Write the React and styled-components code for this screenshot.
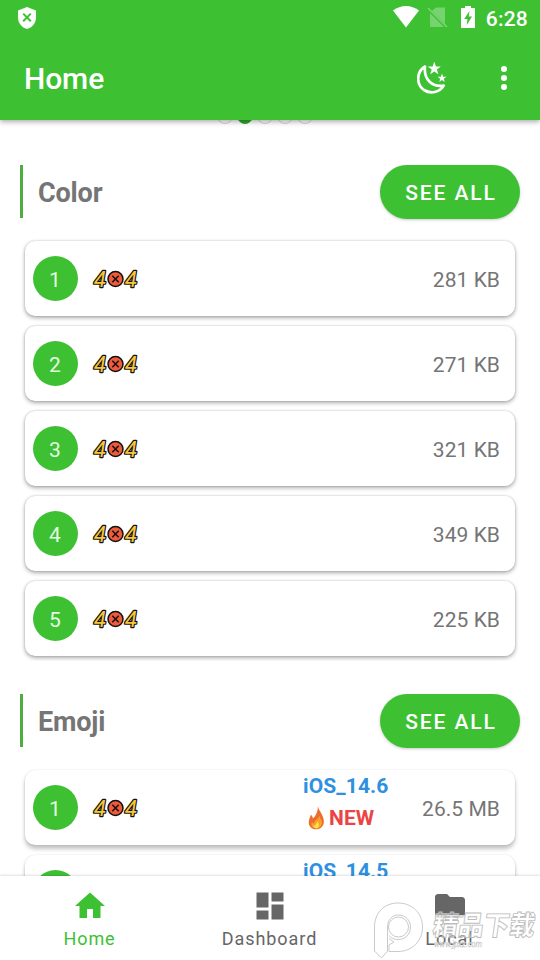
import React from 'react'
import styled, { createGlobalStyle } from 'styled-components'

const GlobalStyle = createGlobalStyle`
    * {
        box-sizing: border-box;
    }
    body {
        margin: 0;
        background: #fff;
        font-family: Roboto, "Noto Sans CJK SC", sans-serif;
    }
`;

const green = '#3dc133';

const Screen = styled.div`
    position: relative;
    width: 540px;
    height: 960px;
    display: flex;
    flex-direction: column;
    overflow: hidden;
    background: #fff;
`;

const TopContainer = styled.header`
    position: relative;
    z-index: 2;
    height: 120px;
    flex: none;
    background: ${green};
    color: white;
    box-shadow: 0 2px 5px rgba(0, 0, 0, 0.32);
`;

const StatusBar = styled.div`
    height: 36px;
    display: flex;
    align-items: center;
    padding: 0 12px 0 18px;
`;

const StatusIcons = styled.div`
    display: flex;
    align-items: center;
    margin-left: auto;

    svg {
        margin-bottom: 2px;
    }
    svg:nth-child(2) {
        margin-left: 8px;
        margin-right: 13px;
    }
`;

const Clock = styled.span`
    font-size: 21px;
    font-weight: 500;
    line-height: 36px;
    padding-top: 2px;
    margin-left: 11px;
    letter-spacing: 0.2px;
`;

const Toolbar = styled.div`
    height: 84px;
    display: flex;
    align-items: center;
    padding: 0 30px 0 24px;
`;

const Title = styled.h1`
    flex: 1;
    margin: 0;
    font-size: 30px;
    font-weight: 500;
    letter-spacing: -0.1px;
`;

const MoreDots = styled.div`
    width: 12px;
    margin-left: 51px;
    display: flex;
    flex-direction: column;
    align-items: center;
    gap: 3px;

    i {
        width: 6px;
        height: 6px;
        border-radius: 50%;
        background: white;
    }
`;

const Content = styled.main`
    flex: 1;
    min-height: 0;
    overflow: hidden;
`;

const Pager = styled.div`
    height: 16px;
    margin-top: -12px;
    display: flex;
    justify-content: center;
    gap: 4px;
    padding-right: 10px;
`;

const PagerDot = styled.span`
    width: 16px;
    height: 16px;
    border-radius: 50%;
    border: 1px solid ${(props) => (props.$active ? '#35a52d' : '#d2d2d2')};
    background: ${(props) => (props.$active ? '#35a52d' : 'transparent')};
`;

const Section = styled.section`
    padding-top: ${(props) => props.$top}px;
`;

const SectionHeader = styled.div`
    height: 54px;
    display: flex;
    align-items: center;
    justify-content: space-between;
    padding: 0 20px;
`;

const SectionTitle = styled.h2`
    height: 53px;
    margin: 0 0 1px;
    padding-left: 15px;
    border-left: 3px solid #4caf3f;
    color: #757575;
    font-size: 27px;
    line-height: 56px;
    font-weight: 700;
    letter-spacing: -0.15px;
`;

const SeeAllButton = styled.button`
    width: 140px;
    height: 54px;
    padding: 2px 0 0 2px;
    border: none;
    border-radius: 27px;
    background: ${green};
    color: white;
    font-family: inherit;
    font-size: 21px;
    font-weight: 500;
    letter-spacing: 1.9px;
    box-shadow: 0 1px 3px rgba(0, 0, 0, 0.22);
`;

const List = styled.div`
    display: flex;
    flex-direction: column;
    gap: 10px;
    margin-top: 17px;
    padding: 5px 25px 5px;
    overflow: hidden;
`;

const Card = styled.div`
    height: 75px;
    flex: none;
    display: flex;
    align-items: center;
    padding: 0 15px 0 8px;
    border-radius: 10px;
    background: white;
    box-shadow: ${(props) => (props.$raised
        ? '0 4px 4px rgba(0, 0, 0, 0.24), 0 0 2px rgba(0, 0, 0, 0.14)'
        : '0 2px 4px rgba(0, 0, 0, 0.32), 0 0 2px rgba(0, 0, 0, 0.22)')};
`;

const Rank = styled.div`
    width: 45px;
    height: 45px;
    margin-right: 14px;
    padding-right: 1px;
    border-radius: 50%;
    background: ${green};
    color: #e4fbe2;
    font-size: 21px;
    line-height: 48px;
    text-align: center;
`;

const Tags = styled.div`
    width: 119px;
    height: 75px;
    margin-left: auto;
    font-size: 21px;
    font-weight: 700;
    line-height: 32px;
`;

const Version = styled.div`
    color: #2e90e0;
    letter-spacing: 0.1px;
`;

const NewTag = styled.div`
    display: flex;
    align-items: center;
    gap: 4px;
    padding-left: 5px;
    color: #ea4444;
`;

const Size = styled.div`
    margin-left: ${(props) => (props.$tagged ? '0' : 'auto')};
    padding-top: 3px;
    color: #757575;
    font-size: 21px;
    letter-spacing: 0.05px;
    white-space: nowrap;
`;

const BottomNav = styled.nav`
    position: relative;
    z-index: 2;
    height: 84px;
    flex: none;
    display: flex;
    background: white;
    box-shadow: 0 -1px 2px rgba(0, 0, 0, 0.12);
`;

const NavItem = styled.div`
    flex: 1;
    display: flex;
    flex-direction: column;
    align-items: center;
    padding-top: 12px;
    color: ${(props) => (props.$active ? green : '#666')};
`;

const NavLabel = styled.span`
    margin-top: 4px;
    padding-right: 1px;
    font-size: 18px;
    line-height: 21px;
    letter-spacing: 0.95px;
`;

const Watermark = styled.div`
    position: absolute;
    z-index: 3;
    left: 370px;
    top: 898px;
    width: 170px;
    height: 62px;
`;

function ShieldIcon() {
    return (
        <svg width="18" height="22" viewBox="0 0 18 22">
            <path d="M9 0L18 3.4V10.5C18 16 14.2 20.6 9 22C3.8 20.6 0 16 0 10.5V3.4Z" fill="white" />
            <path d="M5.2 6.6L12.8 14.2M12.8 6.6L5.2 14.2" stroke={green} strokeWidth="2" />
        </svg>
    )
}

function WifiIcon() {
    return (
        <svg width="26" height="22" viewBox="0 0 26 22">
            <path d="M0 4.6Q6 0 13 0T26 4.6L13 21.5Z" fill="white" />
        </svg>
    )
}

function NoSimIcon() {
    return (
        <svg width="21" height="21" viewBox="0 0 21 21">
            <path d="M9 0.5H18V16.5L5 3.8ZM3 6L17 20H3Z" fill="white" opacity=".3" />
            <path d="M1 1L20 20" stroke="white" strokeWidth="1.5" opacity=".35" />
        </svg>
    )
}

function BatteryIcon() {
    return (
        <svg width="14" height="22" viewBox="0 0 14 22">
            <path d="M4 0H10V2H14V22H0V2H4Z" fill="white" />
            <path d="M8.4 5L3.2 13H6.4L5.8 19L11 10.6H7.8Z" fill={green} />
        </svg>
    )
}

function NightIcon() {
    return (
        <svg width="30" height="32" viewBox="0 0 30 32">
            <path d="M8 4.5C-1 10-.8 22.5 7 28C13.5 32.2 22.5 30.5 26.7 23.6C15 25.8 6.5 17 8 4.5Z" fill="none" stroke="white" strokeWidth="2.7" strokeLinejoin="round" />
            <path d="M17.3 -.4L18.9 4.4L23.8 4.5L19.9 7.5L21.3 12.3L17.3 9.4L13.2 12.3L14.7 7.5L10.8 4.5L15.7 4.4Z" fill="white" />
            <path d="M25 11.6L26.1 14.7L29.4 14.8L26.8 16.8L27.7 20L25 18.1L22.3 20L23.2 16.8L20.6 14.8L23.9 14.7Z" fill="white" />
        </svg>
    )
}

// "404" placeholder for previews that could not be loaded
function NotFoundLogo() {
    return (
        <svg width="48" height="26" viewBox="0 0 48 26">
            <g fontFamily="Roboto, sans-serif" fontSize="22" fontStyle="italic" fontWeight="400" fill="#f7c63a" stroke="#111" strokeWidth="2.4" strokeLinejoin="round" paintOrder="stroke">
                <text x="2" y="21">4</text>
                <text x="33" y="21">4</text>
            </g>
            <circle cx="23.5" cy="13" r="7.5" fill="#ef5a3a" stroke="#111" strokeWidth="1.5" />
            <path d="M20.3 9.8L26.7 16.2M26.7 9.8L20.3 16.2" stroke="#111" strokeWidth="1.5" />
        </svg>
    )
}

function FireIcon() {
    return (
        <svg width="17" height="24" viewBox="0 0 18 25">
            <path d="M10.5 0C11.5 5 16.5 9 16.8 16C17 21 13.5 24.5 8.5 24.5C3.5 24.5.5 21 .8 16.5C1 13.5 2.5 11.5 3 9C4.5 10 5 11.5 5.2 13C8.5 10 10.5 5.5 10.5 0Z" fill="#ee6c2d" />
            <path d="M12.5 10C12.5 14 16 15 14.5 19.5C13.5 23 10.5 24 8 23.5C4.5 23 3 20 4 17C5 18 5.5 18.5 6.5 18.5C6 15 10.5 14 12.5 10Z" fill="#f9a22b" />
            <path d="M9.5 16C11.5 18 12.5 20 10.8 22.5C9 24.5 5.5 23 5.8 20.5C8 21 9.5 19 9.5 16Z" fill="#fde04b" />
        </svg>
    )
}

function HomeIcon() {
    return (
        <svg width="36" height="36" viewBox="0 0 24 24" fill="currentColor">
            <path d="M10 20v-6h4v6h5v-8h3L12 3 2 12h3v8z" />
        </svg>
    )
}

function DashboardIcon() {
    return (
        <svg width="36" height="36" viewBox="0 0 24 24" fill="currentColor">
            <path d="M3 13h8V3H3v10zm0 8h8v-6H3v6zm10 0h8V11h-8v10zm0-18v6h8V3h-8z" />
        </svg>
    )
}

function FolderIcon() {
    return (
        <svg width="36" height="36" viewBox="0 0 24 24" fill="currentColor">
            <path d="M10 4H4c-1.1 0-2 .9-2 2v12c0 1.1.9 2 2 2h16c1.1 0 2-.9 2-2V8c0-1.1-.9-2-2-2h-8l-2-2z" />
        </svg>
    )
}

function SiteMark() {
    return (
        <Watermark>
            <svg width="170" height="62" viewBox="0 0 170 62">
                {/* fades the bottom of the folder behind the lettering */}
                <path d="M64 17H96V29H64Z" fill="white" opacity=".75" />
                <g fill="none" stroke="#cacaca" strokeWidth="1">
                    <path d="M4.500 53V29C4.500 14 15 5 28 5C42 5 52.500 15 52.500 29C52.500 43 42 53.500 28 53.500H19V47L24 44L19 40.500" />
                    <path d="M4.500 53L11.500 60L17.500 53V29C17.500 22 22 17 28.500 17C35 17 40.500 22 40.500 29C40.500 36.500 35 41.500 28 41.500C24 41.500 21 40 19 37.500" />
                    <circle cx="28.500" cy="29" r="10" />
                </g>
                <text x="67" y="37" fontFamily="'Noto Sans CJK SC', sans-serif" fontWeight="900" fontSize="27" textLength="102" lengthAdjust="spacingAndGlyphs" transform="skewX(-8)" fill="rgba(255,255,255,.4)" stroke="#bdbdbd" strokeWidth=".9">精品下载</text>
                <text x="64" y="49" fontFamily="Roboto, sans-serif" fontSize="9" fontStyle="italic" fill="rgba(255,255,255,.5)" stroke="#cacaca" strokeWidth=".5" textLength="48" lengthAdjust="spacingAndGlyphs">www.jpxz.com</text>
            </svg>
        </Watermark>
    )
}

const colorItems = ['281 KB', '271 KB', '321 KB', '349 KB', '225 KB'];

const emojiItems = [
    { size: '26.5 MB', version: 'iOS_14.6', isNew: true },
    { size: '26.2 MB', version: 'iOS_14.5', isNew: false },
];

function FontCard({ rank, size, version, isNew, raised }) {
    return (
        <Card $raised={raised}>
            <Rank>{rank}</Rank>
            <NotFoundLogo />
            {version && (
            <Tags>
                <Version>{version}</Version>
                {isNew && <NewTag><FireIcon />NEW</NewTag>}
            </Tags>
            )}
            <Size $tagged={!!version}>{size}</Size>
        </Card>
    )
}

export default function App() {
    return (
        <Screen>
            <GlobalStyle />
            <TopContainer>
                <StatusBar>
                    <ShieldIcon />
                    <StatusIcons>
                        <WifiIcon />
                        <NoSimIcon />
                        <BatteryIcon />
                        <Clock>6:28</Clock>
                    </StatusIcons>
                </StatusBar>
                <Toolbar>
                    <Title>Home</Title>
                    <NightIcon />
                    <MoreDots><i /><i /><i /></MoreDots>
                </Toolbar>
            </TopContainer>
            <Content>
                <Pager>
                    {[0, 1, 2, 3, 4].map((n) => <PagerDot key={n} $active={n === 1} />)}
                </Pager>
                <Section $top={41}>
                    <SectionHeader>
                        <SectionTitle>Color</SectionTitle>
                        <SeeAllButton>SEE ALL</SeeAllButton>
                    </SectionHeader>
                    <List>
                        {colorItems.map((size, i) => <FontCard key={size} rank={i + 1} size={size} />)}
                    </List>
                </Section>
                <Section $top={33}>
                    <SectionHeader>
                        <SectionTitle>Emoji</SectionTitle>
                        <SeeAllButton>SEE ALL</SeeAllButton>
                    </SectionHeader>
                    <List>
                        {emojiItems.map((item, i) => <FontCard key={item.version} rank={i + 1} raised {...item} />)}
                    </List>
                </Section>
            </Content>
            <BottomNav>
                <NavItem $active><HomeIcon /><NavLabel>Home</NavLabel></NavItem>
                <NavItem><DashboardIcon /><NavLabel>Dashboard</NavLabel></NavItem>
                <NavItem><FolderIcon /><NavLabel>Local</NavLabel></NavItem>
            </BottomNav>
            <SiteMark />
        </Screen>
    )
}
